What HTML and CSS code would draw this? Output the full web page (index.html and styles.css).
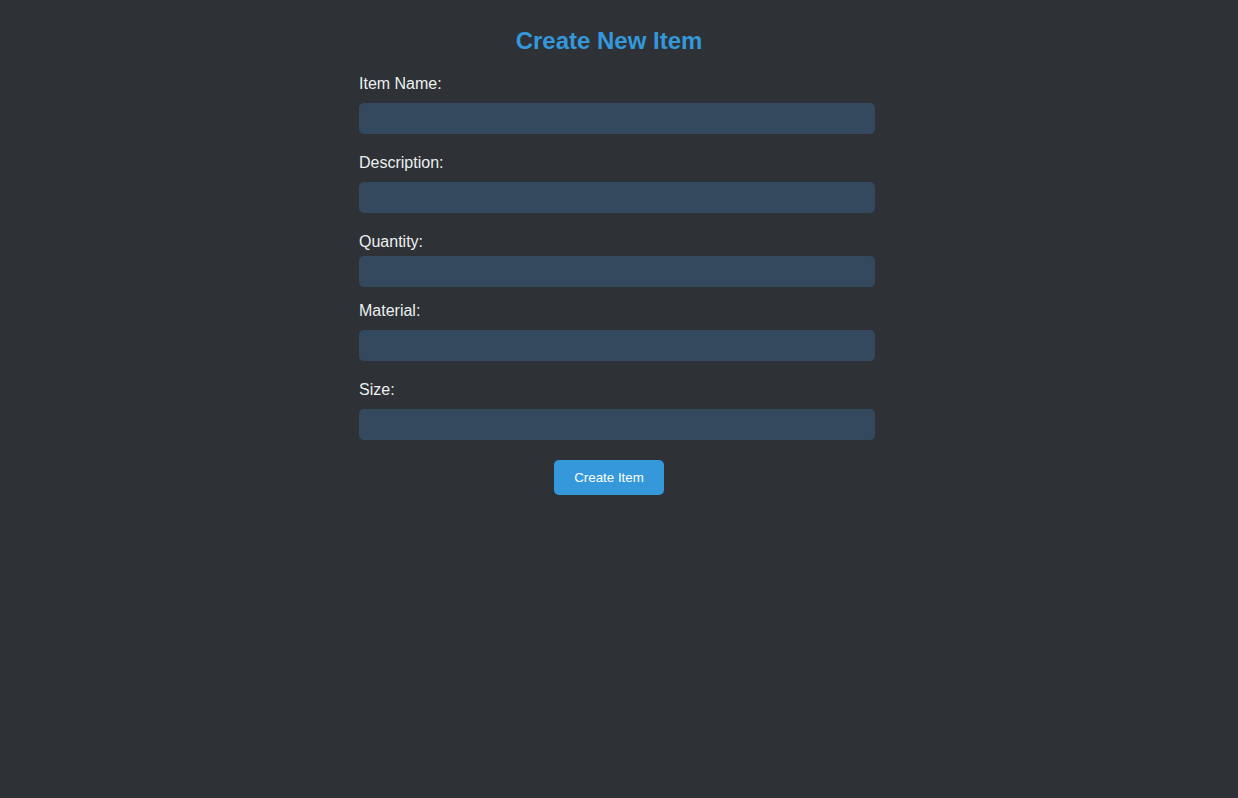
FILE: index.html
```html
<!DOCTYPE html>
<html lang="en">
<head>
<meta charset="utf-8">
<title>Create New Item</title>
<link rel="stylesheet" href="styles.css">
</head>
<body>
<div class="page">
  <h1 class="title">Create New Item</h1>
  <form class="form">
    <div class="group">
      <label class="label" for="name">Item Name:</label>
      <input class="field" id="name" type="text">
    </div>
    <div class="group">
      <label class="label" for="desc">Description:</label>
      <input class="field" id="desc" type="text">
    </div>
    <div class="group">
      <label class="label" for="qty">Quantity:</label>
      <input class="field field-number" id="qty" type="number">
    </div>
    <div class="group">
      <label class="label" for="mat">Material:</label>
      <input class="field" id="mat" type="text">
    </div>
    <div class="group">
      <label class="label" for="size">Size:</label>
      <input class="field" id="size" type="text">
    </div>
    <div class="actions">
      <button class="submit" type="button">Create Item</button>
    </div>
  </form>
</div>
</body>
</html>
```
FILE: styles.css
```css
html, body {
  margin: 0;
  padding: 0;
  background: #2e3135;
}
body {
  font-family: "Liberation Sans", Arial, sans-serif;
  color: #ecf0f1;
  min-height: 798px;
}
.page {
  width: 500px;
  margin: 0 auto;
  padding-right: 20px;
}
.title {
  margin: 27px 0 20px;
  font-size: 24px;
  font-weight: bold;
  color: #3498db;
  text-align: center;
}
.form {
  display: block;
}
.group {
  display: flex;
  flex-direction: column;
  margin-bottom: 15px;
}
.label {
  display: block;
  font-size: 16px;
  margin-bottom: 5px;
  color: #ecf0f1;
}
.field {
  display: block;
  width: 500px;
  padding: 8px;
  margin: 5px 0;
  border: none;
  border-radius: 5px;
  background: #34495e;
  color: #ecf0f1;
  font-family: "Liberation Sans", Arial, sans-serif;
  font-size: 13.33px;
  box-sizing: content-box;
  height: 15px;
  outline: none;
  -moz-appearance: textfield;
}
.field-number {
  margin: 0;
}
.field-number::-webkit-inner-spin-button,
.field-number::-webkit-outer-spin-button {
  -webkit-appearance: none;
  margin: 0;
}
.actions {
  display: flex;
  justify-content: center;
}
.submit {
  padding: 10px 20px;
  border: none;
  border-radius: 5px;
  background: #3498db;
  color: #ffffff;
  font-family: "Liberation Sans", Arial, sans-serif;
  font-size: 13.33px;
  line-height: 15px;
  cursor: pointer;
}
```
